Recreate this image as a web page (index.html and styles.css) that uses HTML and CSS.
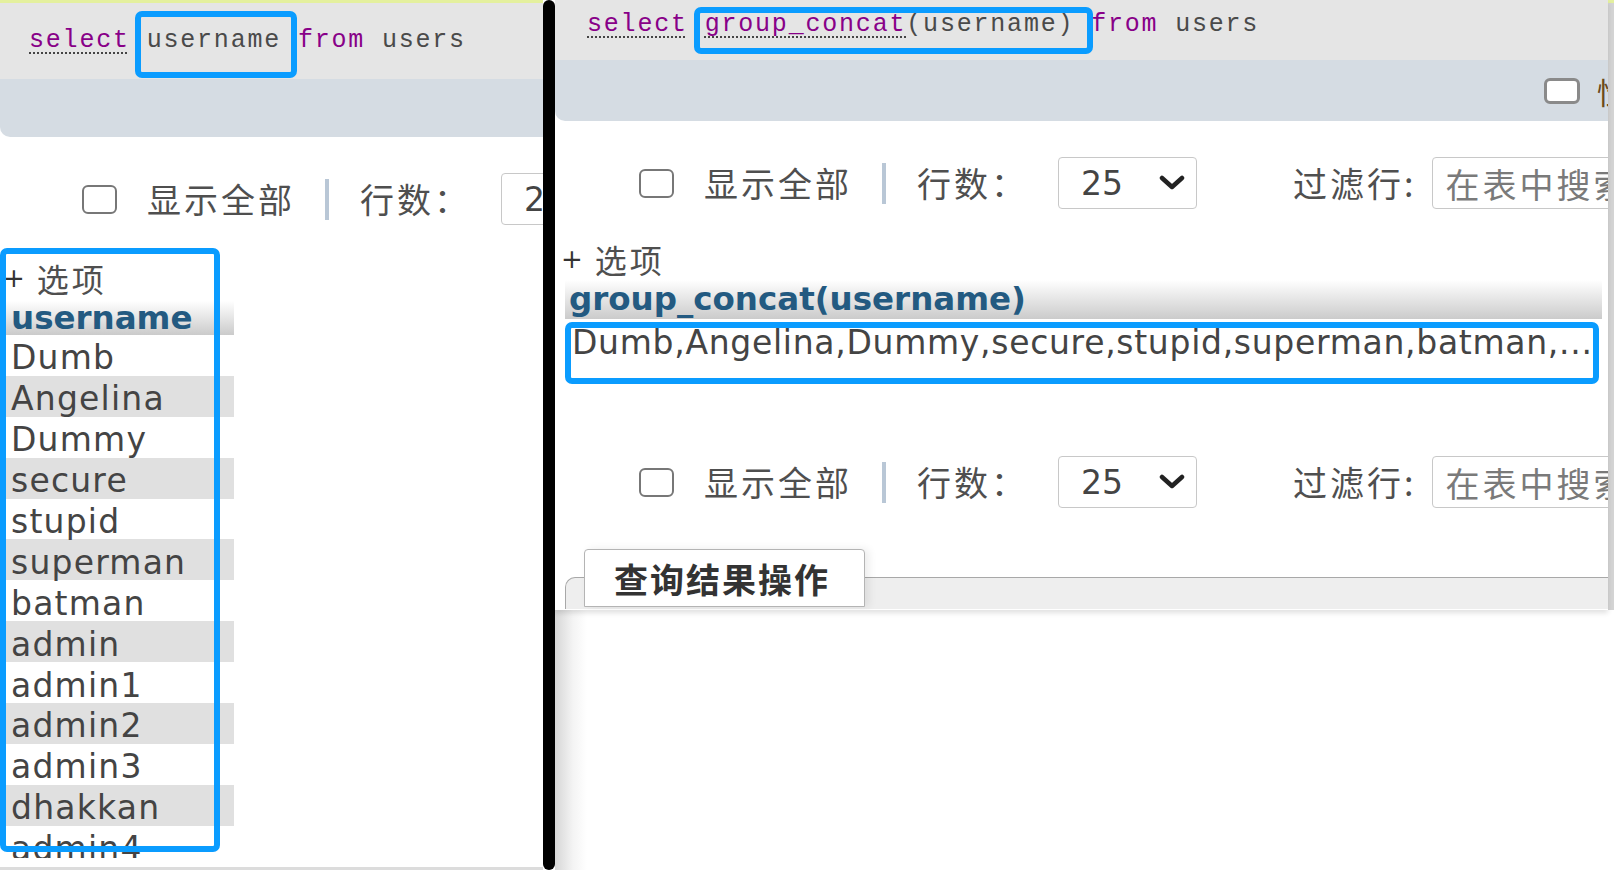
FILE: index.html
```html
<!DOCTYPE html>
<html lang="zh">
<head>
<meta charset="utf-8">
<title>group_concat</title>
<link rel="stylesheet" href="styles.css">
</head>
<body>
<div class="canvas">
  <section class="pane pane-left">
    <div class="sql-band">
      <code class="sql"><span class="kw dotted">select</span> <span class="id">username</span> <span class="kw">from</span> <span class="id">users</span></code>
    </div>
    <div class="opt-band"></div>
    <div class="nav">
      <span class="check"></span>
      <span class="label">显示全部</span>
      <span class="sep"></span>
      <span class="label rows">行数：</span>
      <span class="select"><span class="num">25</span><svg class="chev" viewBox="0 0 26 16" width="26" height="16"><path d="M3 3 L13 12 L23 3" fill="none" stroke="#222" stroke-width="4.5" stroke-linecap="round" stroke-linejoin="round"/></svg></span>
    </div>
    <div class="results">
      <div class="options"><span class="plus">+</span><span class="opt-text">选项</span></div>
      <table class="grid">
        <thead><tr><th>username</th></tr></thead>
        <tbody>
          <tr><td>Dumb</td></tr>
          <tr><td>Angelina</td></tr>
          <tr><td>Dummy</td></tr>
          <tr><td>secure</td></tr>
          <tr><td>stupid</td></tr>
          <tr><td>superman</td></tr>
          <tr><td>batman</td></tr>
          <tr><td>admin</td></tr>
          <tr><td>admin1</td></tr>
          <tr><td>admin2</td></tr>
          <tr><td>admin3</td></tr>
          <tr><td>dhakkan</td></tr>
          <tr><td>admin4</td></tr>
        </tbody>
      </table>
    </div>
    <div class="foot"></div>
    <div class="mark mark-sql-l"></div>
    <div class="mark mark-list-l"></div>
  </section>

  <div class="divider"></div>

  <div class="right-col">
    <section class="pane pane-right">
      <div class="sql-band">
        <code class="sql"><span class="kw dotted">select</span> <span class="kw dotted">group_concat</span><span class="id">(username)</span> <span class="kw">from</span> <span class="id">users</span></code>
      </div>
      <div class="opt-band">
        <span class="check check-sm"></span>
        <span class="profile">性能分析</span>
      </div>
      <div class="nav">
        <span class="check"></span>
        <span class="label">显示全部</span>
        <span class="sep"></span>
        <span class="label rows">行数：</span>
        <span class="select"><span class="num">25</span><svg class="chev" viewBox="0 0 26 16" width="26" height="16"><path d="M3 3 L13 12 L23 3" fill="none" stroke="#222" stroke-width="4.5" stroke-linecap="round" stroke-linejoin="round"/></svg></span>
        <span class="label filter">过滤行:</span>
        <span class="search">在表中搜索</span>
      </div>
      <div class="options"><span class="plus">+</span><span class="opt-text">选项</span></div>
      <table class="grid grid-wide">
        <thead><tr><th>group_concat(username)</th></tr></thead>
        <tbody>
          <tr><td>Dumb,Angelina,Dummy,secure,stupid,superman,batman,...</td></tr>
        </tbody>
      </table>
      <div class="nav nav-2">
        <span class="check"></span>
        <span class="label">显示全部</span>
        <span class="sep"></span>
        <span class="label rows">行数：</span>
        <span class="select"><span class="num">25</span><svg class="chev" viewBox="0 0 26 16" width="26" height="16"><path d="M3 3 L13 12 L23 3" fill="none" stroke="#222" stroke-width="4.5" stroke-linecap="round" stroke-linejoin="round"/></svg></span>
        <span class="label filter">过滤行:</span>
        <span class="search">在表中搜索</span>
      </div>
      <div class="ops">
        <div class="ops-tab">查询结果操作</div>
        <div class="ops-box"></div>
      </div>
      <div class="mark mark-sql-r"></div>
      <div class="mark mark-data-r"></div>
    </section>
    <div class="edge"></div>
  </div>
</div>
</body>
</html>
```

FILE: styles.css
```css
* { box-sizing: border-box; }
html, body { margin: 0; padding: 0; }
body {
  width: 1614px;
  height: 870px;
  overflow: hidden;
  background: #fff;
  font-family: "DejaVu Sans", "Noto Sans CJK SC", sans-serif;
  color: #444;
}
.canvas { display: flex; width: 1614px; height: 870px; }

.pane { position: relative; overflow: hidden; background: #fff; }
.pane-left { width: 543px; height: 870px; border-top: 3px solid #e4f09e; flex: none; }

.divider { width: 12px; height: 870px; background: #000; border-radius: 6px; flex: none; }

.right-col {
  flex: none;
  width: 1059px;
  height: 870px;
  display: flex;
  align-items: flex-start;
  background: linear-gradient(90deg, #d6d6d6 0, #f4f4f4 18px, #fff 32px);
}
.pane-right {
  width: 1053px;
  height: 610px;
  flex: none;
  box-shadow: 0 3px 5px rgba(0, 0, 0, 0.12);
}
.edge { width: 6px; height: 610px; background: #d4d4d4; border-top: 3px solid #e4f09e; flex: none; }

/* SQL band */
.sql-band { background: #e5e5e5; white-space: nowrap; }
.pane-left .sql-band { height: 76px; padding: 23px 0 0 29px; }
.pane-right .sql-band { height: 60px; padding: 10px 0 0 32px; }
.sql {
  font-family: "Liberation Mono", monospace;
  line-height: 30px;
  display: block;
  font-size: 25px;
  letter-spacing: 1.8px;
}
.kw { color: #880088; }
.id { color: #4a4a4a; }
.dotted {
  text-decoration: underline dotted #444;
  text-decoration-thickness: 2px;
  text-underline-offset: 5px;
}

.opt-band { background: #d5dce3; border-bottom-left-radius: 10px; }
.pane-left .opt-band { height: 58px; }
.pane-right .opt-band {
  height: 61px;
  display: flex;
  align-items: center;
  padding-left: 989px;
  white-space: nowrap;
}
.profile {
  margin-left: 17px;
  font-family: "Noto Sans CJK SC", sans-serif;
  font-size: 30px;
  color: #6b4a1a;
}

/* nav rows */
.nav {
  display: flex;
  align-items: center;
  height: 50px;
  margin-top: 37px;
  white-space: nowrap;
}
.pane-left .nav { padding-left: 82px; }
.pane-right .nav { padding-left: 84px; }
.pane-right .nav-2 { margin-top: 90px; }

.check {
  flex: none;
  width: 35px;
  height: 29px;
  border: 2px solid #777;
  border-radius: 6px;
  background: #fff;
}
.check-sm { width: 36px; height: 26px; border: 3px solid #8a8a8a; }

.label {
  font-family: "Noto Sans CJK SC", sans-serif;
  font-size: 34px;
  letter-spacing: 3px;
  line-height: 1;
  color: #4f4f4f;
  margin-left: 30px;
  flex: none;
}
.sep { flex: none; width: 4px; height: 41px; background: #b9c7d6; margin-left: 30px; }
.label.rows { margin-left: 31px; }
.label.filter { margin-left: 96px; }

.select {
  flex: none;
  display: flex;
  align-items: center;
  justify-content: space-between;
  width: 139px;
  height: 52px;
  margin-left: 30px;
  padding: 0 11px 0 22px;
  border: 1px solid #c8c8c8;
  border-radius: 4px;
  background: #fff;
  font-size: 33px;
  color: #444;
}
.chev { display: block; }
.search {
  flex: none;
  width: 300px;
  height: 52px;
  margin-left: 16px;
  padding-left: 12px;
  display: flex;
  align-items: center;
  border: 1px solid #c8c8c8;
  border-radius: 4px;
  font-family: "Noto Sans CJK SC", sans-serif;
  font-size: 34px;
  letter-spacing: 3px;
  color: #7a7a7a;
}

/* options line */
.options {
  display: flex;
  align-items: center;
  color: #4f4f4f;
  white-space: nowrap;
  line-height: 1;
}
.pane-left .options { margin-top: 34px; height: 40px; padding-left: 3px; }
.pane-right .options { margin-top: 33px; height: 36px; padding-left: 6px; }
.plus { font-family: "DejaVu Sans", sans-serif; font-size: 26px; color: #333; }
.opt-text {
  margin-left: 12px;
  font-family: "Noto Sans CJK SC", sans-serif;
  font-size: 32px;
  letter-spacing: 3px;
  line-height: 1;
}

/* grids */
.results { height: 634px; overflow: hidden; }
.grid {
  border-collapse: collapse;
  font-size: 33px;
  letter-spacing: 0.7px;
  color: #444;
}
.pane-left .grid { width: 234px; margin-top: 3px; letter-spacing: 1.2px; }
.grid th {
  text-align: left;
  font-weight: bold;
  font-size: 32.5px;
  letter-spacing: 0;
  color: #235a81;
  background: linear-gradient(#ffffff, #cbcbcb);
  line-height: 1;
  padding: 0 0 0 11px;
  height: 34px;
}
.grid td {
  height: 40.9px;
  padding: 5px 0 0 11px;
  line-height: 1;
  white-space: nowrap;
}
.grid tbody tr:nth-child(even) td { background: #e0e0e0; }

.grid-wide { width: 1037px; margin-left: 10px; margin-top: 3px; }
.grid-wide th { height: 39px; padding-left: 4px; }
.grid-wide td { height: 48px; padding: 0 0 2px 7px; }

.foot { margin-top: 9px; height: 3px; background: #dcdcdc; }

/* query result operations */
.ops { margin-top: 42px; }
.ops-tab {
  position: relative;
  z-index: 1;
  display: flex;
  align-items: center;
  width: 281px;
  height: 58px;
  margin-left: 29px;
  padding-left: 29px;
  background: #fff;
  border: 1px solid #b4b4b4;
  border-radius: 4px 4px 0 0;
  box-shadow: 4px 0 8px rgba(0, 0, 0, 0.08);
  font-family: "Noto Sans CJK SC", sans-serif;
  font-weight: bold;
  font-size: 34px;
  letter-spacing: 2px;
  color: #333;
  white-space: nowrap;
}
.ops-box {
  margin-top: -30px;
  margin-left: 10px;
  height: 32px;
  border-top: 1px solid #a8a8a8;
  border-left: 1px solid #a8a8a8;
  border-top-left-radius: 10px;
  background: #eeeeee;
}

/* annotation boxes */
.mark {
  position: absolute;
  border: 6px solid #0a9cff;
  border-radius: 7px;
  pointer-events: none;
}
.mark-sql-l { left: 135px; top: 8px; width: 162px; height: 67px; }
.mark-list-l { left: 0; top: 245px; width: 220px; height: 604px; }
.mark-sql-r { left: 139px; top: 7px; width: 399px; height: 47px; }
.mark-data-r { left: 10px; top: 322px; width: 1034px; height: 62px; }
```
